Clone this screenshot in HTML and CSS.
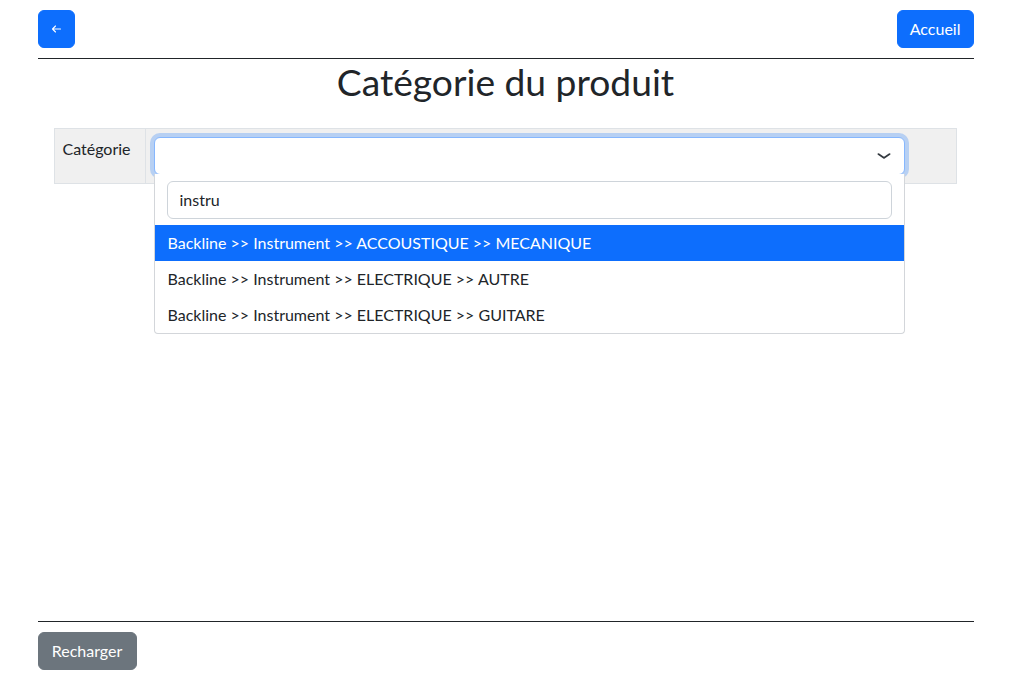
FILE: index.html
```html
<!DOCTYPE html>
<html lang="fr">
<head>
<meta charset="utf-8">
<title>Catégorie du produit</title>
<link rel="stylesheet" href="styles.css">
</head>
<body>
<div class="page">
  <header class="topbar">
    <button class="btn btn-primary btn-back" type="button" aria-label="Retour">
      <svg width="13" height="12" viewBox="0 0 13 12" fill="none" stroke="#fff" stroke-width="1.1" stroke-linecap="round" stroke-linejoin="round"><path d="M10.5 6H2.5M5.5 3L2.5 6L5.5 9"/></svg>
    </button>
    <button class="btn btn-primary" type="button">Accueil</button>
  </header>
  <hr class="rule">
  <main class="main">
    <h1 class="title">Catégorie du produit</h1>
    <table class="form-table">
      <tr>
        <th class="label-cell">Catégorie</th>
        <td class="field-cell">
          <div class="ts-wrapper">
            <div class="ts-control">
              <svg class="chevron" width="16" height="12" viewBox="0 0 16 16" fill="none" stroke="#343a40" stroke-width="2" stroke-linecap="round" stroke-linejoin="round" preserveAspectRatio="none"><path d="m2.5 5.5 5.5 5 5.5-5"/></svg>
            </div>
            <div class="ts-dropdown">
              <div class="dropdown-input-wrap">
                <div class="dropdown-input">instru</div>
              </div>
              <div class="option active">Backline &gt;&gt; Instrument &gt;&gt; ACCOUSTIQUE &gt;&gt; MECANIQUE</div>
              <div class="option">Backline &gt;&gt; Instrument &gt;&gt; ELECTRIQUE &gt;&gt; AUTRE</div>
              <div class="option">Backline &gt;&gt; Instrument &gt;&gt; ELECTRIQUE &gt;&gt; GUITARE</div>
            </div>
          </div>
        </td>
      </tr>
    </table>
  </main>
  <footer class="footer">
    <hr class="rule rule-footer">
    <button class="btn btn-secondary btn-reload" type="button">Recharger</button>
  </footer>
</div>
</body>
</html>
```

FILE: styles.css
```css
* { box-sizing: border-box; }
html, body { margin: 0; padding: 0; }
body {
  font-family: "Lato", "Noto Sans", sans-serif;
  font-size: 16px;
  line-height: 1.5;
  color: #212529;
  background: #fff;
}
.page {
  width: 936px;
  margin: 0 auto;
  height: 680px;
  display: flex;
  flex-direction: column;
  padding: 10px 0 10px;
}
.topbar {
  display: flex;
  justify-content: space-between;
  align-items: center;
}
.btn {
  font-family: inherit;
  font-size: 16px;
  line-height: 24px;
  padding: 6px 12px;
  border: 1px solid transparent;
  border-radius: 6px;
  color: #fff;
  cursor: pointer;
  display: inline-flex;
  align-items: center;
  justify-content: center;
  height: 38px;
}
.btn-primary { background: #0d6efd; border-color: #0d6efd; }
.btn-secondary { background: #6c757d; border-color: #6c757d; }
.btn-back { width: 37px; padding: 0; }
.btn-reload { width: 99px; }
.rule {
  border: 0;
  border-top: 1px solid #212529;
  margin: 10px 0 0;
  height: 0;
}
.main { flex: 1; }
.title {
  font-size: 37.2px;
  font-weight: 400;
  line-height: 1.2;
  text-align: center;
  margin: 0 0 8px;
  padding-top: 1px;
}
.form-table {
  margin: 23px 16px 0 16px;
  width: 903px;
  border-collapse: collapse;
  background: #f0f0f0;
}
.form-table th, .form-table td {
  border: 1px solid #dee2e6;
  padding: 8px;
  vertical-align: top;
}
.form-table .label-cell {
  width: 91px;
  text-align: left;
  font-weight: 400;
}
.form-table .field-cell { padding: 8px 51px 8px 8px; }
.ts-wrapper {
  position: relative;
  height: 38px;
}
.ts-control {
  height: 38px;
  border: 1px solid #86b7fe;
  border-radius: 6px;
  background: #fff;
  box-shadow: 0 0 0 4px rgba(13,110,253,.25);
  display: flex;
  align-items: center;
  justify-content: flex-end;
  padding-right: 12px;
}
.chevron { display: block; }
.ts-dropdown {
  position: absolute;
  left: 0;
  right: 0;
  top: 37px;
  background: #fff;
  border: 1px solid #d3d6da;
  border-top: 0;
  border-radius: 0 0 4px 4px;
  z-index: 10;
}
.dropdown-input-wrap { padding: 7px 12px 6px 12px; }
.dropdown-input {
  height: 38px;
  border: 1px solid #ced4da;
  border-radius: 6px;
  padding: 6px 12px;
  line-height: 24px;
}
.option {
  height: 36px;
  line-height: 36px;
  padding: 0 13px;
  white-space: nowrap;
}
.option.active { background: #0d6efd; color: #fff; }
.footer .btn { margin-top: 10px; }
.rule-footer { margin: 0; }
```
